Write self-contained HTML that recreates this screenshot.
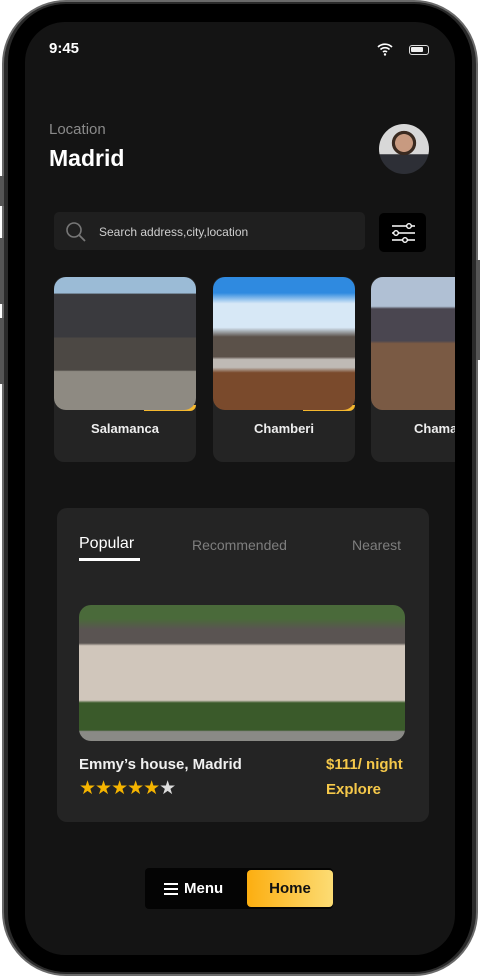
<!DOCTYPE html>
<html><head><meta charset="utf-8"><style>
*{margin:0;padding:0;box-sizing:border-box}
body{width:480px;height:976px;background:#fff;font-family:"Liberation Sans",sans-serif;position:relative;overflow:hidden}
.abs{position:absolute}
.phone{left:2px;top:0;width:476px;height:976px;border-radius:64px;background:#2a2a2a;border:2px solid #6a6a6a}
.bez{left:8px;top:4px;width:464px;height:968px;border-radius:58px;background:#000}
.screen{left:25px;top:22px;width:430px;height:933px;border-radius:40px;background:#141414;overflow:hidden}
.btn{background:#555;width:4px;left:0}
.card{background:#242424;border-radius:10px;width:142px;height:185px}
.img{border-radius:12px;overflow:hidden;position:absolute;left:0;top:0;width:142px;height:133px}
.lbl{position:absolute;top:144px;width:100%;text-align:center;color:#eee;font-weight:bold;font-size:13px}
.bar{position:absolute;right:0;top:128px;width:52px;height:6px;background:#f5b82e;border-radius:0 0 12px 0}
</style></head><body>
<div class="abs phone"></div>
<div class="abs btn" style="top:176px;height:30px"></div>
<div class="abs btn" style="top:238px;height:66px"></div>
<div class="abs btn" style="top:318px;height:66px"></div>
<div class="abs btn" style="left:476px;top:260px;height:100px"></div>
<div class="abs bez"></div>
<div class="abs screen">
 <div class="abs" style="left:24px;top:18px;color:#fff;font-weight:bold;font-size:15px">9:45</div>
 <svg class="abs" style="left:352px;top:20px" width="16" height="14" viewBox="0 0 16 14"><path d="M1 5a10 10 0 0 1 14 0M3.5 7.5a6.5 6.5 0 0 1 9 0M6 10a3 3 0 0 1 4 0" stroke="#fff" stroke-width="1.6" fill="none"/><circle cx="8" cy="12.5" r="1.2" fill="#fff"/></svg>
 <div class="abs" style="left:384px;top:23px;width:20px;height:10px;border:1.3px solid #ddd;border-radius:3px"><div style="margin:1px;width:12px;height:5px;background:#eee;border-radius:1px"></div></div>
 <div class="abs" style="left:24px;top:99px;color:#8a8a8a;font-size:15px">Location</div>
 <div class="abs" style="left:24px;top:123px;color:#fff;font-size:23px;font-weight:bold">Madrid</div>
 <div class="abs" style="left:354px;top:102px;width:50px;height:50px;border-radius:50%;background:radial-gradient(circle at 50% 38%,#c89a80 0 22%,#3a2a20 23% 30%,transparent 31%),linear-gradient(180deg,#d8d8d8 0 60%,#2d2f36 61%);"></div>
 <div class="abs" style="left:29px;top:190px;width:311px;height:38px;background:#1f1f1f;border-radius:5px"></div>
 <svg class="abs" style="left:40px;top:199px" width="22" height="22" viewBox="0 0 22 22"><circle cx="9" cy="9" r="7" stroke="#777" stroke-width="1.6" fill="none"/><path d="M14 14l6 6" stroke="#777" stroke-width="1.8"/></svg>
 <div class="abs" style="left:74px;top:203px;color:#cfcfcf;font-size:12px">Search address,city,location</div>
 <div class="abs" style="left:354px;top:191px;width:47px;height:39px;background:#000;border-radius:5px"></div>
 <svg class="abs" style="left:366px;top:200px" width="24" height="22" viewBox="0 0 24 22"><g stroke="#fff" stroke-width="1.4" fill="none"><path d="M1 4h23M1 11h23M1 18h23"/><circle cx="18" cy="4" r="2.3" fill="#000"/><circle cx="5" cy="11" r="2.3" fill="#000"/><circle cx="14" cy="18" r="2.3" fill="#000"/></g></svg>

 <div class="abs card" style="left:29px;top:255px"><div class="bar"></div><div class="img" style="background:linear-gradient(180deg,#9bbbd6 0 12%,#3a3a3e 13% 45%,#4c4844 46% 70%,#8e8a82 71%)"></div><div class="lbl">Salamanca</div></div>
 <div class="abs card" style="left:188px;top:255px"><div class="bar"></div><div class="img" style="background:linear-gradient(180deg,#2f8ae0 0 12%,#d7e8f6 20% 38%,#5b5149 45% 60%,#bfbab5 62% 68%,#7a4a2c 72%)"></div><div class="lbl">Chamberi</div></div>
 <div class="abs card" style="left:346px;top:255px;width:110px"><div class="img" style="width:110px;background:linear-gradient(180deg,#b0c0d4 0 22%,#4a4650 24% 48%,#7a5a44 50%)"></div><div class="lbl" style="left:43px;width:auto">Chamartin</div></div>

 <div class="abs" style="left:32px;top:486px;width:372px;height:314px;background:#242424;border-radius:10px"></div>
 <div class="abs" style="left:54px;top:513px;color:#fff;font-size:16px">Popular</div>
 <div class="abs" style="left:54px;top:536px;width:61px;height:3px;background:#fff"></div>
 <div class="abs" style="left:167px;top:515px;color:#7e7e7e;font-size:14px">Recommended</div>
 <div class="abs" style="left:327px;top:515px;color:#7e7e7e;font-size:14px">Nearest</div>
 <div class="abs" style="left:54px;top:583px;width:326px;height:136px;border-radius:12px;background:linear-gradient(180deg,#4a6a3a 0 10%,#5a5452 18% 28%,#d0c6bb 30% 70%,#3a5a2a 72% 92%,#8a8a86 93%)"></div>
 <div class="abs" style="left:54px;top:734px;color:#f0f0f0;font-size:15px;font-weight:bold">Emmy’s house, Madrid</div>
 <div class="abs" style="left:54px;top:755px;font-size:19px;letter-spacing:-1px;color:#f5b400">★★★★★<span style="color:#ddd">★</span></div>
 <div class="abs" style="left:301px;top:734px;color:#f5c84a;font-size:15px;font-weight:bold">$111/ night</div>
 <div class="abs" style="left:301px;top:759px;color:#f5c84a;font-size:15px;font-weight:bold">Explore</div>

 <div class="abs" style="left:120px;top:846px;width:188px;height:41px;background:#040404;border-radius:4px"></div>
 <svg class="abs" style="left:139px;top:861px" width="14" height="12"><path d="M0 1h14M0 6h14M0 11h14" stroke="#fff" stroke-width="2"/></svg>
 <div class="abs" style="left:159px;top:858px;color:#fff;font-size:15px;font-weight:bold">Menu</div>
 <div class="abs" style="left:222px;top:848px;width:86px;height:37px;border-radius:4px;background:linear-gradient(90deg,#fcae10,#fcdc74);color:#111;font-size:15px;font-weight:bold;text-align:center;line-height:37px">Home</div>
</div>
</body></html>
